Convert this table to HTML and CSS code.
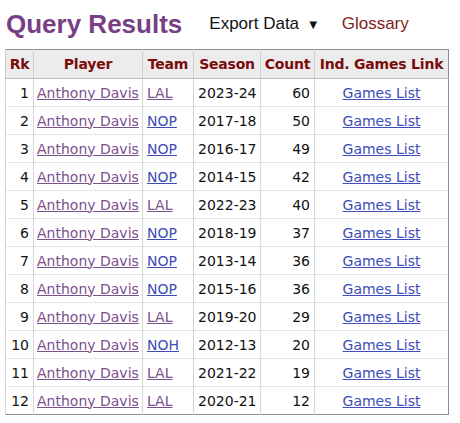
FILE: index.html
```html
<!DOCTYPE html>
<html>
<head>
<meta charset="utf-8">
<link rel="stylesheet" href="styles.css">
</head>
<body>
<div class="page">
  <div class="topbar">
    <h1 class="title">Query Results</h1>
    <span class="export">Export Data <span class="caret">▼</span></span>
    <a class="glossary">Glossary</a>
  </div>
  <table class="results">
    <colgroup>
      <col class="c-rk"><col class="c-player"><col class="c-team"><col class="c-season"><col class="c-count"><col class="c-link">
    </colgroup>
    <thead>
      <tr><th>Rk</th><th>Player</th><th>Team</th><th>Season</th><th>Count</th><th>Ind. Games Link</th></tr>
    </thead>
    <tbody>
      <tr><td class="num">1</td><td><a class="visited">Anthony Davis</a></td><td><a class="visited">LAL</a></td><td>2023-24</td><td class="num">60</td><td class="ctr"><a class="link">Games List</a></td></tr>
      <tr><td class="num">2</td><td><a class="visited">Anthony Davis</a></td><td><a class="link">NOP</a></td><td>2017-18</td><td class="num">50</td><td class="ctr"><a class="link">Games List</a></td></tr>
      <tr><td class="num">3</td><td><a class="visited">Anthony Davis</a></td><td><a class="link">NOP</a></td><td>2016-17</td><td class="num">49</td><td class="ctr"><a class="link">Games List</a></td></tr>
      <tr><td class="num">4</td><td><a class="visited">Anthony Davis</a></td><td><a class="link">NOP</a></td><td>2014-15</td><td class="num">42</td><td class="ctr"><a class="link">Games List</a></td></tr>
      <tr><td class="num">5</td><td><a class="visited">Anthony Davis</a></td><td><a class="visited">LAL</a></td><td>2022-23</td><td class="num">40</td><td class="ctr"><a class="link">Games List</a></td></tr>
      <tr><td class="num">6</td><td><a class="visited">Anthony Davis</a></td><td><a class="link">NOP</a></td><td>2018-19</td><td class="num">37</td><td class="ctr"><a class="link">Games List</a></td></tr>
      <tr><td class="num">7</td><td><a class="visited">Anthony Davis</a></td><td><a class="link">NOP</a></td><td>2013-14</td><td class="num">36</td><td class="ctr"><a class="link">Games List</a></td></tr>
      <tr><td class="num">8</td><td><a class="visited">Anthony Davis</a></td><td><a class="link">NOP</a></td><td>2015-16</td><td class="num">36</td><td class="ctr"><a class="link">Games List</a></td></tr>
      <tr><td class="num">9</td><td><a class="visited">Anthony Davis</a></td><td><a class="visited">LAL</a></td><td>2019-20</td><td class="num">29</td><td class="ctr"><a class="link">Games List</a></td></tr>
      <tr><td class="num">10</td><td><a class="visited">Anthony Davis</a></td><td><a class="link">NOH</a></td><td>2012-13</td><td class="num">20</td><td class="ctr"><a class="link">Games List</a></td></tr>
      <tr><td class="num">11</td><td><a class="visited">Anthony Davis</a></td><td><a class="visited">LAL</a></td><td>2021-22</td><td class="num">19</td><td class="ctr"><a class="link">Games List</a></td></tr>
      <tr><td class="num">12</td><td><a class="visited">Anthony Davis</a></td><td><a class="visited">LAL</a></td><td>2020-21</td><td class="num">12</td><td class="ctr"><a class="link">Games List</a></td></tr>
    </tbody>
  </table>
</div>
</body>
</html>
```
FILE: styles.css
```css
html, body { margin: 0; padding: 0; background: #fff; }
.page { padding: 9px 0 0 5px; }
.topbar { display: flex; align-items: center; margin-bottom: 10px; }
.title {
  margin: 0 0 0 1px;
  font-family: "Liberation Sans", Arial, sans-serif;
  font-weight: bold;
  font-size: 26px;
  line-height: 30px;
  color: #763f86;
}
.export {
  margin-left: 27px;
  font-family: "Liberation Sans", Arial, sans-serif;
  font-size: 17px;
  color: #111;
}
.caret { font-size: 13px; margin-left: 3px; }
.glossary {
  margin-left: 22px;
  font-family: "Liberation Sans", Arial, sans-serif;
  font-size: 17px;
  color: #7f1d1d;
}
.results {
  border-collapse: collapse;
  table-layout: fixed;
  width: 443px;
  border: 1px solid #8c8c8c;
  font-family: "DejaVu Sans", Verdana, sans-serif;
  font-size: 14px;
  color: #111;
}
.c-rk { width: 28px; }
.c-player { width: 109px; }
.c-team { width: 51px; }
.c-season { width: 67px; }
.c-count { width: 54px; }
.c-link { width: 134px; }
.results th {
  background: #ececec;
  color: #7a0b0b;
  font-weight: bold;
  height: 28px;
  padding: 0 2px;
  border-left: 1px solid #cfcfcf;
  border-bottom: 1px solid #bdbdbd;
  white-space: nowrap;
  letter-spacing: -0.2px;
}
.results td {
  height: 27px;
  padding: 0 4px;
  border-left: 1px solid #d6d6d6;
  border-bottom: 1px dotted #cfcfcf;
  white-space: nowrap;
  overflow: hidden;
}
.results td:nth-child(2) { padding: 0 3px; }
.results .num { text-align: right; }
.results .ctr { text-align: center; }
.visited { color: #7b4f8c; text-decoration: underline; }
.link { color: #3d4cb8; text-decoration: underline; }
```
